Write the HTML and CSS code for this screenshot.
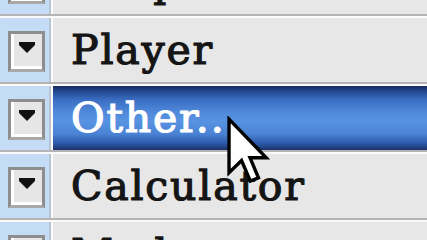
FILE: index.html
```html
<!DOCTYPE html>
<html>
<head>
<meta charset="utf-8">
<link rel="stylesheet" href="styles.css">
</head>
<body>
<div class="list">
  <div class="row">
    <div class="side"><span class="btn"><span class="tri"></span></span></div>
    <div class="cell">Graphics</div>
  </div>
  <div class="row">
    <div class="side"><span class="btn"><span class="tri"></span></span></div>
    <div class="cell">Player</div>
  </div>
  <div class="row">
    <div class="side"><span class="btn"><span class="tri"></span></span></div>
    <div class="cell selected">Other...</div>
  </div>
  <div class="row">
    <div class="side"><span class="btn"><span class="tri"></span></span></div>
    <div class="cell">Calculator</div>
  </div>
  <div class="row">
    <div class="side"><span class="btn"><span class="tri"></span></span></div>
    <div class="cell">Modem</div>
  </div>
</div>
<svg class="cursor" width="44" height="70" viewBox="0 0 13 20">
  <path d="M0.6 0.6 L0.6 16.4 L4.3 12.8 L6.9 18.9 L9.3 17.9 L6.8 12 L11.6 12 Z" fill="#ffffff" stroke="#000000" stroke-width="1" stroke-linejoin="miter"/>
</svg>
</body>
</html>
```
FILE: styles.css
```css
html, body {
  margin: 0;
  padding: 0;
  width: 427px;
  height: 240px;
  overflow: hidden;
  background: #e7e7e7;
}
.list {
  display: flex;
  flex-direction: column;
  margin-top: -50px;
}
.row {
  display: flex;
  height: 64px;
  border-bottom: 2px solid #b4b4b4;
}
.row + .row {
  border-top: 2px solid #fbfbfb;
}
.side {
  width: 51px;
  flex: none;
  background: #c4dcf6;
  border-right: 2px solid #b8c4d0;
  display: flex;
  align-items: center;
  padding-left: 8px;
  box-sizing: border-box;
}
.btn {
  width: 37px;
  height: 41px;
  box-sizing: border-box;
  border: 3px solid #8e8e8e;
  border-bottom-color: #a8a8a8;
  background: #e6e6e6;
  display: flex;
  align-items: center;
  justify-content: center;
  box-shadow: inset 3px -3px 0 #ffffff;
  margin-top: 2px;
}
.tri {
  width: 0;
  height: 0;
  border-left: 8px solid transparent;
  border-right: 8px solid transparent;
  border-top: 8px solid #111;
  position: relative;
  top: -2px;
}
.tri::before {
  content: "";
  position: absolute;
  left: -8px;
  top: -11px;
  width: 16px;
  height: 3px;
  background: #111;
}
.cell {
  flex: 1;
  border-left: 2px solid #fbfbfb;
  display: flex;
  align-items: center;
  padding-left: 18px;
  font-family: "DejaVu Serif", serif;
  font-size: 41px;
  letter-spacing: 1.8px;
  -webkit-text-stroke: 1.2px #151515;
  color: #151515;
}
.selected {
  color: #ffffff;
  -webkit-text-stroke: 1.2px #ffffff;
  background: linear-gradient(to bottom, #15295a 0%, #24478e 8%, #3b6fc4 22%, #4f88da 40%, #5893e2 55%, #4a82d4 75%, #2c58a8 90%, #1a3266 100%);
}
.cursor {
  position: absolute;
  left: 227px;
  top: 116px;
}
```
